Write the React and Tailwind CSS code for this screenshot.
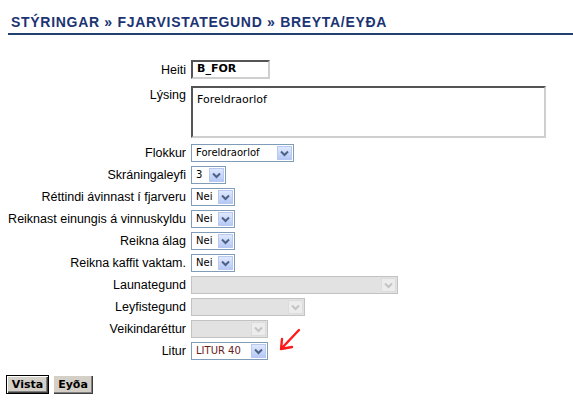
import React from "react";

const ctl = { fontFamily: '"DejaVu Sans", Verdana, sans-serif' };

function Chevron({ disabled }) {
  return (
    <svg width="9" height="7" viewBox="0 0 9 7">
      <path
        d="M1 1.5 L4.5 5 L8 1.5"
        fill="none"
        stroke={disabled ? "#c4c4c4" : "#4d6185"}
        strokeWidth="2"
      />
    </svg>
  );
}

function Select({ value, width, disabled, textColor }) {
  return (
    <div
      className={`flex h-[18px] ${width} border ${
        disabled ? "border-[#c2c2c2] bg-[#e2e2e2]" : "border-[#7f9db9] bg-white"
      }`}
    >
      <span
        className={`flex-1 pl-[4px] text-[10px] leading-[16px] whitespace-nowrap overflow-hidden ${
          textColor || "text-black"
        }`}
        style={ctl}
      >
        {value}
      </span>
      <span
        className={`m-px flex w-[15px] items-center justify-center border ${
          disabled
            ? "border-[#dcdcdc] bg-[#ececec]"
            : "border-[#b8c8f0] bg-gradient-to-b from-[#dfe8fe] to-[#b6c9f6]"
        }`}
      >
        <Chevron disabled={disabled} />
      </span>
    </div>
  );
}

function Row({ label, children, className = "" }) {
  return (
    <div className={`flex items-center ${className}`}>
      <div className="w-[183px] shrink-0 pr-[5px] text-right text-[12.5px] leading-[14px] whitespace-nowrap text-black">
        {label}
      </div>
      <div className="relative">{children}</div>
    </div>
  );
}

export default function App() {
  return (
    <div
      className="h-[404px] w-[573px] bg-white"
      style={{ fontFamily: '"Liberation Sans", Arial, sans-serif' }}
    >
      {/* Title */}
      <div className="ml-[8px] border-b-2 border-[#1f3f6f] pt-[13px] pb-[2px]">
        <h1 className="pl-[3px] text-[14px] font-bold leading-[18px] tracking-[0.7px] text-[#1c3473]">
          STÝRINGAR » FJARVISTATEGUND » BREYTA/EYÐA
        </h1>
      </div>

      <div className="ml-[8px] mt-[25px]">
        <Row label="Heiti">
          <div
            className="flex h-[19px] w-[79px] items-center border-2 border-t-[#555] border-l-[#555] border-r-[#cfcfcf] border-b-[#cfcfcf] pl-[4px] text-[11px] font-bold text-black"
            style={ctl}
          >
            B_FOR
          </div>
        </Row>

        <div className="mt-[7px] flex items-start">
          <div className="w-[183px] shrink-0 pr-[5px] pt-[2px] text-right text-[12.5px] leading-[14px] text-black">
            Lýsing
          </div>
          <div
            className="h-[52px] w-[355px] border-2 border-t-[#555] border-l-[#555] border-r-[#cfcfcf] border-b-[#cfcfcf] pl-[4px] pt-[5px] text-[11px] leading-[14px] text-black"
            style={ctl}
          >
            Foreldraorlof
          </div>
        </div>

        <div className="mt-[6px] flex flex-col gap-[4px]">
          <Row label="Flokkur">
            <Select value="Foreldraorlof" width="w-[103px]" />
          </Row>
          <Row label="Skráningaleyfi">
            <Select value="3" width="w-[35px]" />
          </Row>
          <Row label="Réttindi ávinnast í fjarveru">
            <Select value="Nei" width="w-[44px]" />
          </Row>
          <Row label="Reiknast einungis á vinnuskyldu">
            <Select value="Nei" width="w-[44px]" />
          </Row>
          <Row label="Reikna álag">
            <Select value="Nei" width="w-[44px]" />
          </Row>
          <Row label="Reikna kaffit vaktam.">
            <Select value="Nei" width="w-[44px]" />
          </Row>
          <Row label="Launategund">
            <Select value="" width="w-[207px]" disabled />
          </Row>
          <Row label="Leyfistegund">
            <Select value="" width="w-[114px]" disabled />
          </Row>
          <Row label="Veikindaréttur">
            <Select value="" width="w-[77px]" disabled />
          </Row>
          <Row label="Litur">
            <Select value="LITUR 40" width="w-[77px]" textColor="text-[#6b1a1a]" />
            <svg
              className="absolute left-[86px] top-[-14px]"
              width="26"
              height="26"
              viewBox="0 0 26 26"
            >
              <path
                d="M22 2 L4 21 M4 21 L5 11 M4 21 L15 19"
                fill="none"
                stroke="#ff1a1a"
                strokeWidth="2.4"
                strokeLinecap="round"
              />
            </svg>
          </Row>
        </div>
      </div>

      <div className="ml-[6px] mt-[15px] flex gap-[4px]" style={ctl}>
        <button className="h-[19px] w-[43px] border border-black bg-[#d4d0c8] text-[11px] font-bold leading-[15px] text-black shadow-[inset_1px_1px_0_#fff,inset_-1px_-1px_0_#404040,inset_-2px_-2px_0_#808080]">
          Vista
        </button>
        <button className="h-[19px] w-[40px] bg-[#d4d0c8] text-[11px] font-bold leading-[17px] text-black shadow-[inset_1px_1px_0_#fff,inset_-1px_-1px_0_#404040,inset_-2px_-2px_0_#808080]">
          Eyða
        </button>
      </div>
    </div>
  );
}
